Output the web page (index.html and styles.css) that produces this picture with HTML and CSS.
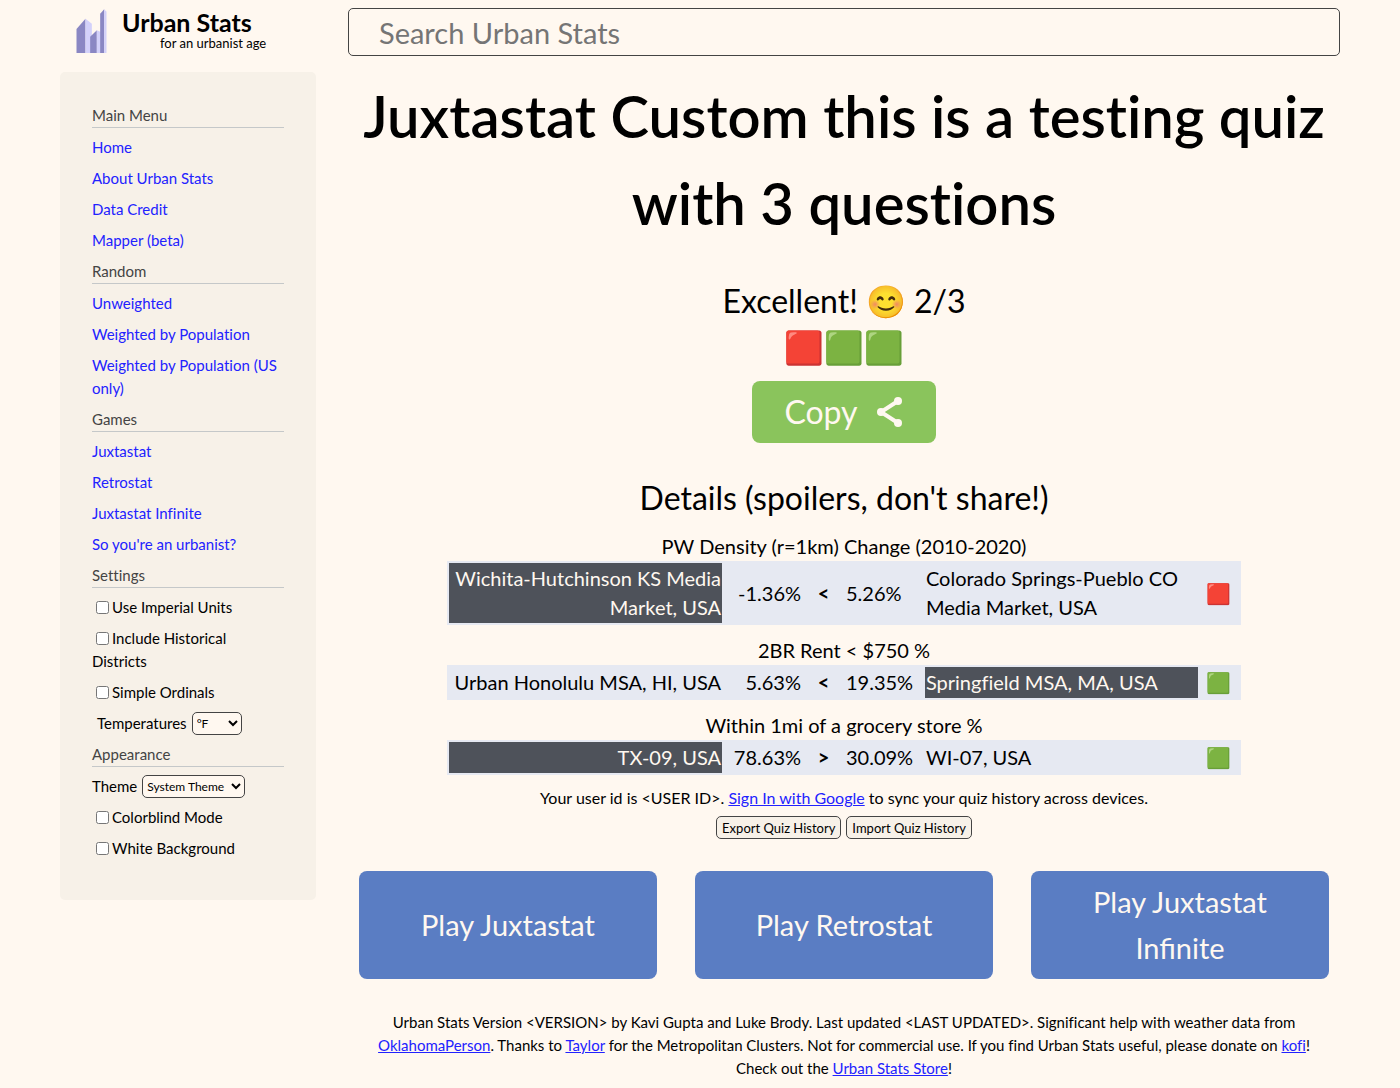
FILE: index.html
```html
<!DOCTYPE html>
<html lang="en">
<head>
<meta charset="utf-8">
<meta name="viewport" content="width=device-width, initial-scale=1">
<title>Urban Stats</title>
<link rel="stylesheet" href="styles.css">
</head>
<body>
<div class="page">
  <header class="header">
    <a class="logo" href="#">
      <svg class="logo-mark" viewBox="50 28 92 132" aria-hidden="true">
        <path fill="#8a87c3" d="M51 88L78 57V160H51Z"/>
        <path fill="#d3d1fa" d="M78 57L97 72V160H78Z"/>
        <path fill="#8a87c3" d="M92 111L112 92V160H92Z"/>
        <path fill="#d3d1fa" d="M112 92L124 97V160H112Z"/>
        <path fill="#8a87c3" d="M122 42L134 29V160H122Z"/>
        <path fill="#d3d1fa" d="M134 29L141 36V160H134Z"/>
      </svg>
      <span class="logo-text">
        <span class="logo-name">Urban Stats</span>
        <span class="logo-tag">for an urbanist age</span>
      </span>
    </a>
    <input class="search" type="text" placeholder="Search Urban Stats" aria-label="Search Urban Stats">
  </header>

  <div class="columns">
    <nav class="sidebar">
      <div class="side-title">Main Menu</div>
      <ul class="side-list">
        <li><a href="#">Home</a></li>
        <li><a href="#">About Urban Stats</a></li>
        <li><a href="#">Data Credit</a></li>
        <li><a href="#">Mapper (beta)</a></li>
      </ul>
      <div class="side-title">Random</div>
      <ul class="side-list">
        <li><a href="#">Unweighted</a></li>
        <li><a href="#">Weighted by Population</a></li>
        <li><a href="#">Weighted by Population (US only)</a></li>
      </ul>
      <div class="side-title">Games</div>
      <ul class="side-list">
        <li><a href="#">Juxtastat</a></li>
        <li><a href="#">Retrostat</a></li>
        <li><a href="#">Juxtastat Infinite</a></li>
        <li><a href="#">So you're an urbanist?</a></li>
      </ul>
      <div class="side-title">Settings</div>
      <ul class="side-list">
        <li><input class="check" type="checkbox" id="imperial"><label for="imperial">Use Imperial Units</label></li>
        <li><input class="check" type="checkbox" id="historical"><label for="historical">Include Historical<br>Districts</label></li>
        <li><input class="check" type="checkbox" id="ordinals"><label for="ordinals">Simple Ordinals</label></li>
        <li class="side-select indented"><label for="temperature">Temperatures</label>
          <select class="select temperature" id="temperature"><option>°F</option><option>°C</option></select></li>
      </ul>
      <div class="side-title">Appearance</div>
      <ul class="side-list">
        <li class="side-select"><label for="theme">Theme</label>
          <select class="select theme" id="theme"><option>System Theme</option><option>Light Theme</option><option>Dark Theme</option></select></li>
        <li><input class="check" type="checkbox" id="colorblind"><label for="colorblind">Colorblind Mode</label></li>
        <li><input class="check" type="checkbox" id="white"><label for="white">White Background</label></li>
      </ul>
    </nav>

    <main class="content">
      <h1 class="title">Juxtastat Custom this is a testing quiz with 3 questions</h1>

      <section class="result">
        <div>Excellent! 😊 2/3</div>
        <div>🟥🟩🟩</div>
        <button class="copy" type="button">
          <span>Copy</span>
          <svg class="share" viewBox="0 0 26 30" aria-hidden="true">
            <path d="M21 4L4 15L21 26" fill="none" stroke="#fff8f0" stroke-width="4"/>
            <circle cx="21" cy="4" r="4" fill="#fff8f0"/>
            <circle cx="4" cy="15" r="4" fill="#fff8f0"/>
            <circle cx="21" cy="26" r="4" fill="#fff8f0"/>
          </svg>
        </button>
      </section>

      <section class="details">
        <h2 class="details-title">Details (spoilers, don't share!)</h2>
        <table class="question">
          <caption>PW Density (r=1km) Change (2010-2020)</caption>
          <colgroup><col class="place"><col class="value"><col class="mark"><col class="value"><col class="place"><col class="mark"></colgroup>
          <tbody><tr>
            <td class="right chosen">Wichita-Hutchinson KS Media Market, USA</td><td class="right">-1.36%</td><td class="sign">&lt;</td>
            <td>5.26%</td><td>Colorado Springs-Pueblo CO Media Market, USA</td><td class="mark-cell">🟥</td>
          </tr></tbody>
        </table>
        <table class="question">
          <caption>2BR Rent &lt; $750 %</caption>
          <colgroup><col class="place"><col class="value"><col class="mark"><col class="value"><col class="place"><col class="mark"></colgroup>
          <tbody><tr>
            <td class="right">Urban Honolulu MSA, HI, USA</td><td class="right">5.63%</td><td class="sign">&lt;</td>
            <td>19.35%</td><td class="chosen">Springfield MSA, MA, USA</td><td class="mark-cell">🟩</td>
          </tr></tbody>
        </table>
        <table class="question">
          <caption>Within 1mi of a grocery store %</caption>
          <colgroup><col class="place"><col class="value"><col class="mark"><col class="value"><col class="place"><col class="mark"></colgroup>
          <tbody><tr>
            <td class="right chosen">TX-09, USA</td><td class="right">78.63%</td><td class="sign">&gt;</td>
            <td>30.09%</td><td>WI-07, USA</td><td class="mark-cell">🟩</td>
          </tr></tbody>
        </table>
      </section>

      <section class="account">
        <div>Your user id is &lt;USER ID&gt;. <a href="#">Sign In with Google</a> to sync your quiz history across devices.</div>
        <div class="history">
          <button class="small-button" type="button">Export Quiz History</button>
          <button class="small-button" type="button">Import Quiz History</button>
        </div>
      </section>

      <div class="play">
        <button class="play-button" type="button">Play Juxtastat</button>
        <button class="play-button" type="button">Play Retrostat</button>
        <button class="play-button" type="button">Play Juxtastat Infinite</button>
      </div>

      <footer class="footer">Urban Stats Version &lt;VERSION&gt; by Kavi Gupta and Luke Brody. Last updated &lt;LAST UPDATED&gt;. Significant help with weather data from <a href="#">OklahomaPerson</a>. Thanks to <a href="#">Taylor</a> for the Metropolitan Clusters. Not for commercial use. If you find Urban Stats useful, please donate on <a href="#">kofi</a>! Check out the <a href="#">Urban Stats Store</a>!</footer>
    </main>
  </div>
</div>
</body>
</html>
```
FILE: styles.css
```css
* { box-sizing: border-box; }

body {
  margin: 0;
  background: #fff8f0;
  color: #000;
  font: 16px/23px Lato, "Noto Color Emoji", sans-serif;
  font-variant-ligatures: none;
}

a { color: #2222ff; }

button, input, select { font-family: inherit; }

.page { padding: 8px 60px; }

.header, .columns {
  display: grid;
  grid-template-columns: 256px minmax(0, 1fr);
  column-gap: 32px;
  align-items: start;
}

.header { margin-bottom: 16px; }

.logo {
  display: flex;
  gap: 15px;
  padding: 1px 0 0 16px;
  color: #000;
  text-decoration: none;
}

.logo-mark { width: 31px; height: 44px; }

.logo-text { display: flex; flex-direction: column; }

.logo-name { font-size: 25px; font-weight: 700; line-height: 26px; }

.logo-tag { padding-left: 38px; font-size: 13px; line-height: 16px; }

.search {
  width: 100%;
  height: 48px;
  padding: 0 30px;
  border: 1px solid #444;
  border-radius: 5px;
  background: #fff8f0;
  font-size: 29px;
}

.search::placeholder { color: #757575; }

.sidebar {
  padding: 32px 32px 40px;
  border-radius: 5px;
  background: #f7f1e8;
  font-size: 15px;
}

.side-title {
  margin-bottom: 8px;
  border-bottom: 1px solid #c5c8c9;
  color: #444;
}

.side-list {
  display: flex;
  flex-direction: column;
  gap: 8px;
  margin: 0 0 8px;
  padding: 0;
  list-style: none;
}

.side-list:last-child { margin-bottom: 0; }

.side-list a { text-decoration: none; }

.check { width: 13px; height: 13px; margin: 0 3px 0 4px; vertical-align: -1px; }

.side-select { display: flex; gap: 5px; }

.indented { padding-left: 5px; }

.select {
  height: 23px;
  padding: 0;
  border: 1px solid #444;
  border-radius: 5px;
  background: #fff8f0;
  color: #000;
  font-size: 12px;
}

.temperature { width: 50px; }

.theme { width: 103px; }

.content { text-align: center; }

.title { margin: 0; font-size: 58px; font-weight: 600; line-height: 87px; }

.result { margin-top: 32px; font-size: 32px; line-height: 46px; }

.copy {
  display: inline-flex;
  align-items: center;
  gap: 19px;
  margin-top: 11px;
  padding: 8px 33px 8px 32px;
  border: 0;
  border-radius: 8px;
  background: #8ac45c;
  color: #fff8f0;
  font-size: 32px;
  line-height: 46px;
  vertical-align: top;
}

.share { width: 26px; height: 30px; }

.details { margin-top: 32px; }

.details-title { margin: 0 0 11px; font-size: 32px; font-weight: 400; line-height: 46px; }

.question {
  width: 80%;
  margin: 0 auto 11px;
  border-spacing: 2px;
  table-layout: fixed;
  background: #e6e9f2;
  font-size: 20px;
  line-height: 29px;
  text-align: left;
}

.question caption { background: #fff8f0; text-align: center; }

.question td { padding: 1px; }

.place { width: 35%; }

.value { width: 10%; }

.mark { width: 5%; }

.question .right { text-align: right; }

.question .sign { font-weight: 700; text-align: center; }

.question .mark-cell { text-align: center; }

.question .chosen { background: #4e525a; color: #fff8f0; }

.history { display: flex; justify-content: center; gap: 5px; margin-top: 7px; }

.small-button {
  height: 23px;
  padding: 0 5px;
  border: 1px solid #444;
  border-radius: 5px;
  background: #f7f1e8;
  color: #000;
  font-size: 13px;
}

.play {
  display: grid;
  grid-template-columns: repeat(3, minmax(0, 1fr));
  gap: 38px;
  margin: 32px 11px;
}

.play-button {
  min-height: 108px;
  padding: 8px 32px;
  border: 0;
  border-radius: 8px;
  background: #5a7dc3;
  color: #fff8f0;
  font-size: 29px;
  line-height: 46px;
}

.footer { padding: 0 16px; font-size: 15px; }
```
